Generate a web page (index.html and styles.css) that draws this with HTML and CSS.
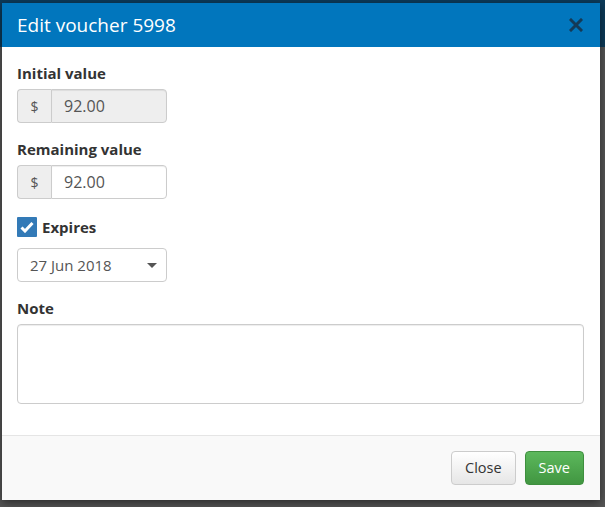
FILE: index.html
```html
<!DOCTYPE html>
<html lang="en">
<head>
  <meta charset="UTF-8" />
  <meta name="viewport" content="width=device-width, initial-scale=1.0"/>
  <title>Edit voucher</title>
  <link rel="stylesheet" href="styles.css">
</head>
<body>
  <div class="modal">
    <div class="modal-header">
      <h4 class="modal-title">Edit voucher 5998</h4>
      <button class="close" type="button" aria-label="Close">
        <svg width="14" height="14" viewBox="0 0 14 14">
          <path d="M2 2 L12 12 M12 2 L2 12" stroke="#143a57" stroke-width="3" stroke-linecap="square" fill="none"/>
        </svg>
      </button>
    </div>

    <form class="modal-body">
      <div class="form-group">
        <label>Initial value</label>
        <div class="input-group">
          <span class="addon">$</span>
          <input class="form-control" type="text" value="92.00" disabled>
        </div>
      </div>

      <div class="form-group">
        <label>Remaining value</label>
        <div class="input-group">
          <span class="addon">$</span>
          <input class="form-control" type="text" value="92.00">
        </div>
      </div>

      <div class="checkbox">
        <span class="check-box">
          <svg width="14" height="12" viewBox="0 0 14 12">
            <path d="M1.5 6.5 L5 10 L12.5 2" stroke="#fff" stroke-width="3" fill="none"/>
          </svg>
        </span>
        <span class="check-label">Expires</span>
      </div>

      <div class="form-group">
        <div class="select">
          <span>27 Jun 2018</span>
          <span class="caret"></span>
        </div>
      </div>

      <div class="form-group">
        <label>Note</label>
        <textarea class="form-control note"></textarea>
      </div>
    </form>

    <div class="modal-footer">
      <button class="btn btn-default" type="button">Close</button>
      <button class="btn btn-success" type="button">Save</button>
    </div>
  </div>
</body>
</html>
```

FILE: styles.css
```css
body {
  margin: 0;
  font-family: 'Open Sans', sans-serif;
  font-size: 15px;
  color: #333;
  background: linear-gradient(#0c3a59 0, #0c3a59 47px, #565656 47px);
  height: 507px;
  overflow: hidden;
}

.modal {
  width: 598px;
  margin: 3px 0 0 2px;
  background: #fff;
  box-shadow: 0 3px 9px rgba(0, 0, 0, 0.5);
}

.modal-header {
  display: flex;
  align-items: center;
  justify-content: space-between;
  background: #0176bd;
  padding: 12px 15px;
}

.modal-title {
  margin: 0;
  font-size: 19px;
  font-weight: 400;
  line-height: 20px;
  color: #fff;
}

.close {
  background: transparent;
  border: none;
  padding: 0;
  margin-right: 2px;
  display: flex;
  cursor: pointer;
}

.modal-body {
  padding: 16px 16px 15px 15px;
}

.form-group {
  margin-bottom: 16px;
}

label {
  display: block;
  font-weight: 700;
  line-height: 20px;
  margin-bottom: 6px;
}

.input-group {
  display: flex;
  width: 150px;
  height: 34px;
}

.addon {
  width: 34px;
  box-sizing: border-box;
  display: flex;
  align-items: center;
  justify-content: center;
  background: #eee;
  border: 1px solid #ccc;
  border-right: none;
  border-radius: 4px 0 0 4px;
  color: #555;
  font-size: 14px;
}

.form-control {
  box-sizing: border-box;
  border: 1px solid #ccc;
  border-radius: 4px;
  padding: 6px 12px;
  font-family: inherit;
  font-size: 16px;
  color: #555;
  background: #fff;
  box-shadow: inset 0 1px 1px rgba(0, 0, 0, 0.075);
}

.input-group .form-control {
  flex: 1;
  min-width: 0;
  border-radius: 0 4px 4px 0;
}

.form-control:disabled {
  background: #eee;
  color: #555;
  opacity: 1;
}

.checkbox {
  display: flex;
  align-items: center;
  height: 24px;
  margin-bottom: 9px;
}

.check-box {
  width: 20px;
  height: 20px;
  background: #337ab7;
  border-radius: 1px;
  display: flex;
  align-items: center;
  justify-content: center;
  margin-right: 5px;
}

.check-label {
  font-weight: 700;
}

.select {
  box-sizing: border-box;
  width: 150px;
  height: 34px;
  border: 1px solid #ccc;
  border-radius: 4px;
  padding: 0 9px 0 12px;
  display: flex;
  align-items: center;
  justify-content: space-between;
  font-size: 15px;
  color: #555;
}

.caret {
  width: 0;
  height: 0;
  border-left: 5px solid transparent;
  border-right: 5px solid transparent;
  border-top: 5px solid #555;
}

.note {
  display: block;
  width: 100%;
  height: 80px;
  resize: none;
}

.modal-footer {
  display: flex;
  justify-content: flex-end;
  gap: 9px;
  padding: 15px 16px 15px 15px;
  background: #f9f9f9;
  border-top: 1px solid #e5e5e5;
}

.btn {
  font-family: inherit;
  font-size: 14.5px;
  line-height: 20px;
  padding: 6px 12px;
  border-radius: 4px;
  cursor: pointer;
}

.btn-default {
  color: #333;
  background: linear-gradient(#fff, #e6e6e6);
  border: 1px solid #ccc;
  padding: 6px 13px;
}

.btn-success {
  color: #fff;
  background: linear-gradient(#5cb85c, #419641);
  border: 1px solid #3e8f3e;
  padding: 6px 13px;
}
```
